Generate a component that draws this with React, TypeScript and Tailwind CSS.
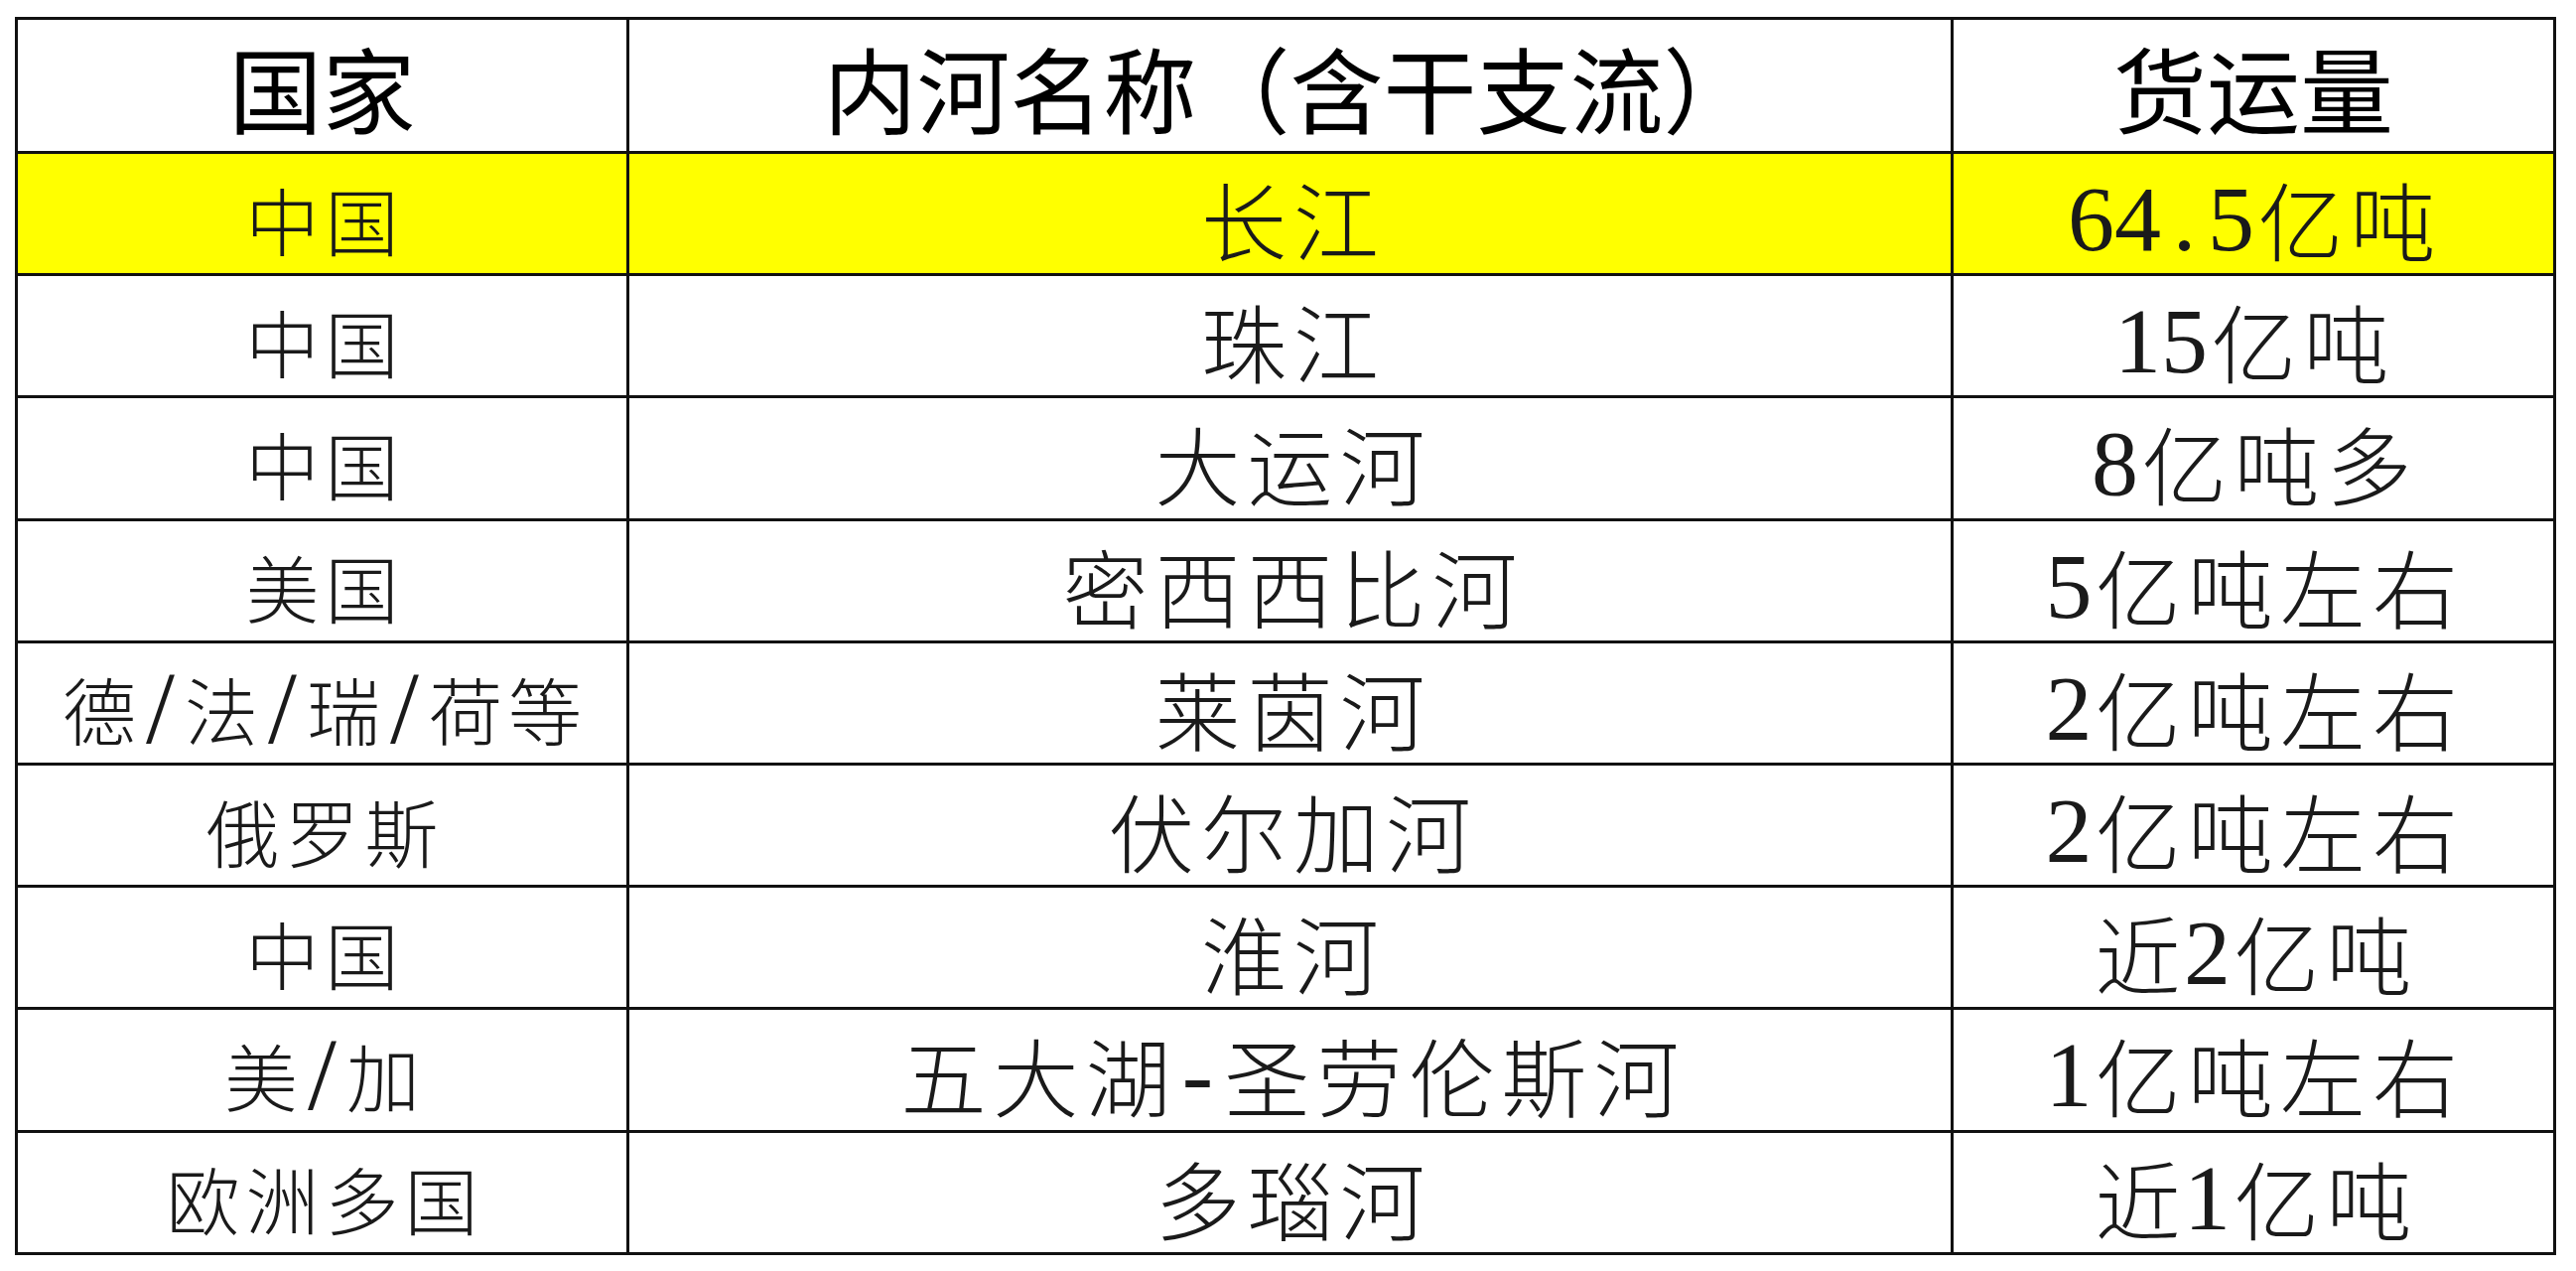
import React from "react";

const rows: [string, string, string][] = [
  ["中国", "长江", "64.5亿吨"],
  ["中国", "珠江", "15亿吨"],
  ["中国", "大运河", "8亿吨多"],
  ["美国", "密西西比河", "5亿吨左右"],
  ["德/法/瑞/荷等", "莱茵河", "2亿吨左右"],
  ["俄罗斯", "伏尔加河", "2亿吨左右"],
  ["中国", "淮河", "近2亿吨"],
  ["美/加", "五大湖-圣劳伦斯河", "1亿吨左右"],
  ["欧洲多国", "多瑙河", "近1亿吨"],
];

function Chars({ text, big }: { text: string; big: boolean }) {
  return (
    <>
      {Array.from(text).map((c, i) => {
        const ascii = /[\x00-\x7f]/.test(c);
        if (ascii) {
          return (
            <span
              key={i}
              className={
                big
                  ? "inline-block w-[47px] text-center font-['Liberation_Serif',serif] font-normal text-[94px]"
                  : "inline-block w-[43px] h-[74px] leading-[74px] text-center font-['Liberation_Serif',serif] font-normal text-[104px]"
              }
            >
              {c}
            </span>
          );
        }
        return (
          <span
            key={i}
            className={
              big
                ? "inline-block w-[93px] text-center text-[86px]"
                : "inline-block w-[80px] text-center text-[74px]"
            }
          >
            {c}
          </span>
        );
      })}
    </>
  );
}

export default function App() {
  return (
    <div className="min-h-screen w-full bg-white overflow-hidden">
      <div className="ml-[15px] mt-[17px] inline-grid grid-cols-[613px_1331px_604px] grid-rows-[132px_repeat(9,120.2px)] gap-[3px] p-[3px] bg-[#111111]">
        {["国家", "内河名称（含干支流）", "货运量"].map((h) => (
          <div
            key={h}
            className="flex items-center justify-center bg-white pt-[2px] font-['Noto_Sans_CJK_SC',sans-serif] font-normal text-[94px] leading-none text-black"
          >
            {h}
          </div>
        ))}
        {rows.map((r, ri) =>
          r.map((cell, ci) => (
            <div
              key={ri + "-" + ci}
              className={
                (ri === 0 ? "bg-[#ffff00] " : "bg-white ") +
                "flex items-center justify-center pt-[10px] whitespace-nowrap font-['Noto_Sans_CJK_SC',sans-serif] font-light leading-none text-[#1a1a1a]"
              }
            >
              <div className="flex items-center">
                <Chars text={cell} big={ci !== 0} />
              </div>
            </div>
          ))
        )}
      </div>
    </div>
  );
}
